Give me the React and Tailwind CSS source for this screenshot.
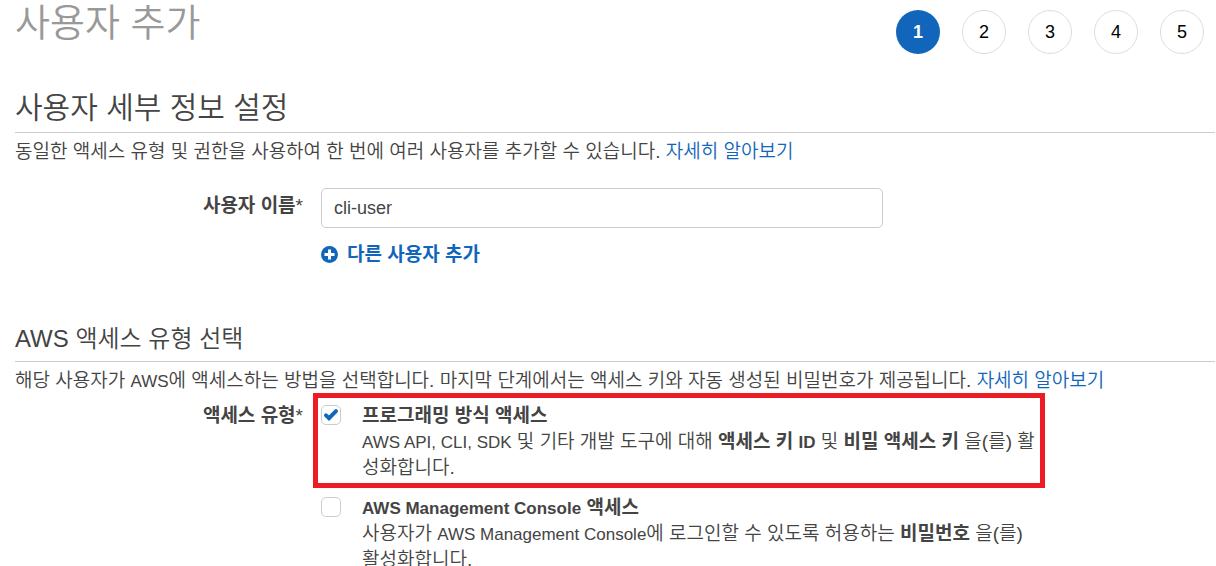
const steps = [1, 2, 3, 4, 5];

function Steps() {
  return (
    <ol className="flex gap-[22px]">
      {steps.map((n) => (
        <li
          key={n}
          aria-current={n === 1 ? 'step' : undefined}
          className={
            n === 1
              ? 'flex size-11 items-center justify-center rounded-full bg-[#1166bb] text-lg font-bold text-white'
              : 'flex size-11 items-center justify-center rounded-full border border-[#dddddd] text-lg text-black'
          }
        >
          {n}
        </li>
      ))}
    </ol>
  );
}

function Latin({ children }) {
  return <span className="text-[17px] leading-none">{children}</span>;
}

function Checkbox({ id, defaultChecked }) {
  return (
    <span className="relative mt-0.5 size-5 shrink-0">
      <input
        id={id}
        type="checkbox"
        defaultChecked={defaultChecked}
        className="peer block size-5 appearance-none rounded-[5px] border border-[#cccccc] bg-white"
      />
      <svg
        viewBox="0 0 20 20"
        aria-hidden="true"
        className="pointer-events-none absolute inset-0 hidden size-5 peer-checked:block"
      >
        <path d="M5 10.4 L8 13.2 L15 6.1" fill="none" stroke="#1166bb" strokeWidth="4" strokeLinecap="round" />
      </svg>
    </span>
  );
}

function Option({ id, title, defaultChecked, children }) {
  return (
    <div className="flex gap-[21px]">
      <Checkbox id={id} defaultChecked={defaultChecked} />
      <div>
        <label htmlFor={id} className="block font-bold">
          {title}
        </label>
        <p>{children}</p>
      </div>
    </div>
  );
}

export default function App() {
  return (
    <main
      lang="ko"
      className="bg-white pr-px pl-[15px] font-['Liberation_Sans','Noto_Sans_CJK_KR',sans-serif] text-[19px] leading-[26px] font-[350] text-[#444444]"
    >
      <header className="flex items-start justify-between pt-px pr-[11px]">
        <h1 className="text-[38px] leading-[44px] text-[#999999]">사용자 추가</h1>
        <div className="pt-[9px]">
          <Steps />
        </div>
      </header>

      <section className="mt-[34px]">
        <h2 className="border-b border-[#cccccc] pb-1 text-[30px] leading-10">사용자 세부 정보 설정</h2>
        <p className="mt-1.5">
          동일한 액세스 유형 및 권한을 사용하여 한 번에 여러 사용자를 추가할 수 있습니다.{' '}
          <a href="#users" className="text-[#1166bb]">자세히 알아보기</a>
        </p>
        <div className="mt-[23px] flex gap-[18px]">
          <label htmlFor="user-name" className="w-72 shrink-0 pt-[5px] text-right">
            <b className="font-bold">사용자 이름</b>*
          </label>
          <div>
            <input
              id="user-name"
              type="text"
              defaultValue="cli-user"
              className="block h-10 w-[562px] rounded-[5px] border border-[#cccccc] px-3 text-lg"
            />
            <button type="button" className="mt-3.5 flex items-center gap-2 font-bold text-[#1166bb]">
              <svg viewBox="0 0 18 18" aria-hidden="true" className="size-[18px]">
                <circle cx="8.5" cy="8.5" r="8.5" fill="#1166bb" />
                <path d="M8.5 3.5V13.5M3.5 8.5H13.5" stroke="#ffffff" strokeWidth="3" />
              </svg>
              다른 사용자 추가
            </button>
          </div>
        </div>
      </section>

      <section className="mt-[55px]">
        <h3 className="border-b border-[#cccccc] pb-1.5 text-2xl leading-8">AWS 액세스 유형 선택</h3>
        <p className="mt-[7px] leading-6">
          해당 사용자가 <Latin>AWS</Latin>에 액세스하는 방법을 선택합니다. 마지막 단계에서는 액세스 키와 자동 생성된 비밀번호가 제공됩니다.{' '}
          <a href="#access" className="text-[#1166bb]">자세히 알아보기</a>
        </p>
        <div className="flex gap-[10px]">
          <div className="w-72 shrink-0 pt-2.5 text-right">
            <b className="font-bold">액세스 유형</b>*
          </div>
          <div className="w-[732px]">
            <div className="border-[5px] border-[#ed1c24] pt-[5px] pb-0.5 pl-[3px]">
              <Option id="programmatic" title="프로그래밍 방식 액세스" defaultChecked>
                <Latin>AWS API, CLI, SDK</Latin> 및 기타 개발 도구에 대해{' '}
                <b className="font-bold">액세스 키 <Latin>ID</Latin></b> 및 <b className="font-bold">비밀 액세스 키</b> 을(를) 활성화합니다.
              </Option>
            </div>
            <div className="pt-[7px] pr-[5px] pl-2">
              <Option id="console" title={<><Latin>AWS Management Console</Latin> 액세스</>}>
                사용자가 <Latin>AWS Management Console</Latin>에 로그인할 수 있도록 허용하는{' '}
                <b className="font-bold">비밀번호</b> 을(를) 활성화합니다.
              </Option>
            </div>
          </div>
        </div>
      </section>
    </main>
  );
}
